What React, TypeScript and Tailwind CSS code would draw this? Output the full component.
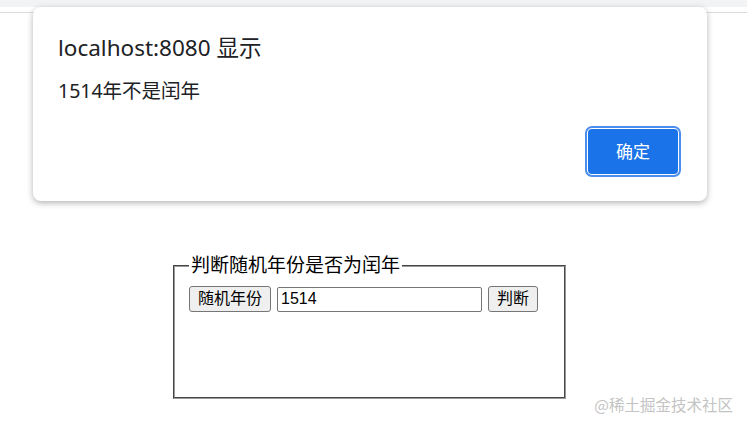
import React from "react";

export default function App() {
  return (
    <div className="relative w-[747px] h-[428px] bg-white overflow-hidden">
      <div className="h-[7px] bg-[#f1f3f4]" />
      <div className="h-[5px] bg-white" />
      <div className="h-[1px] bg-[#dadce0]" />

      <div className="ml-[173px] mt-[242px] w-[393px]">
        <fieldset className="border-2 border-[#9a9a9a] h-[144px] px-[14px] pt-[9px]" style={{ borderStyle: "groove" }}>
          <legend className="px-[2px] text-[19px] leading-[22px] text-black font-['Liberation_Sans','Noto_Sans_CJK_SC',sans-serif]">
            判断随机年份是否为闰年
          </legend>
          <div className="flex items-center gap-[6px] font-['Liberation_Sans','Noto_Sans_CJK_SC',sans-serif]">
            <button className="h-[26px] px-[8px] bg-[#efefef] border border-[#767676] rounded-[3px] text-[16px] leading-none text-black">
              随机年份
            </button>
            <input
              readOnly
              value="1514"
              className="w-[205px] h-[25px] border border-[#767676] rounded-[2px] px-[3px] text-[16px] text-black outline-none"
            />
            <button className="h-[26px] px-[8px] bg-[#efefef] border border-[#767676] rounded-[3px] text-[16px] leading-none text-black">
              判断
            </button>
          </div>
        </fieldset>
      </div>

      <div className="absolute right-[14px] bottom-[12px] text-[15.5px] text-[#c4c4c4] font-['Noto_Sans_CJK_SC',sans-serif]">
        @稀土掘金技术社区
      </div>

      <div className="absolute left-[33px] top-[7px] w-[674px] h-[194px] bg-white rounded-[8px] shadow-[0_2px_6px_rgba(0,0,0,0.3)] font-['Noto_Sans','Noto_Sans_CJK_SC',sans-serif]">
        <div className="pl-[25px] pt-[26px] text-[22.5px] leading-[30px] text-[#202124]">localhost:8080 显示</div>
        <div className="pl-[25px] pt-[15px] text-[19.5px] leading-[26px] text-[#202124]">1514年不是闰年</div>
        <div className="flex justify-end pr-[26px] pt-[22px]">
          <div className="rounded-[7px] border-2 border-[#4c8ef0] p-[1px] bg-white">
            <button className="w-[90px] h-[45px] rounded-[4px] bg-[#1a73e8] text-white text-[17px]">确定</button>
          </div>
        </div>
      </div>
    </div>
  );
}
